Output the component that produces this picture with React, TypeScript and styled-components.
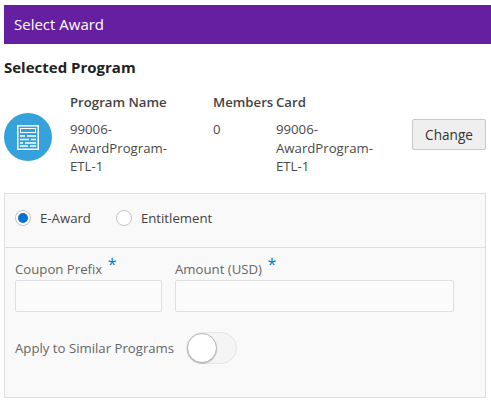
import React from "react";
import styled, { createGlobalStyle } from "styled-components";

const GlobalStyle = createGlobalStyle`
  html, body {
    margin: 0;
    padding: 0;
    background: #fff;
  }
  body {
    font-family: "Open Sans", "Noto Sans", sans-serif;
    color: #333;
  }
`;

const ProgramIcon = () => (
  <svg width="22" height="25" viewBox="0 0 22 25" fill="none">
    <rect x="0.75" y="0.75" width="20.5" height="23.5" stroke="#fff" strokeWidth="1.5" />
    <rect x="3.5" y="3.5" width="15" height="4" stroke="#fff" strokeWidth="1" />
    <path d="M3 11h5M10 11h9M3 14.5h9M14 14.5h5M3 18h3M8 18h11M3 21h8M13 21h6" stroke="#fff" strokeWidth="1.5" />
  </svg>
);

const App: React.FC = () => {
  return (
    <Page>
      <GlobalStyle />
      <Header>Select Award</Header>
      <SectionTitle>Selected Program</SectionTitle>
      <ProgramRow>
        <IconCircle>
          <ProgramIcon />
        </IconCircle>
        <Table>
          <Heading>Program Name</Heading>
          <Heading>Members</Heading>
          <Heading>Card</Heading>
          <Value>99006-<br />AwardProgram-<br />ETL-1</Value>
          <Value>0</Value>
          <Value>99006-<br />AwardProgram-<br />ETL-1</Value>
        </Table>
        <ChangeButton>Change</ChangeButton>
      </ProgramRow>
      <Panel>
        <RadioRow>
          <RadioLabel>
            <Radio checked />
            E-Award
          </RadioLabel>
          <RadioLabel>
            <Radio />
            Entitlement
          </RadioLabel>
        </RadioRow>
        <FormArea>
          <Fields>
            <Field width={147}>
              <FieldLabel>Coupon Prefix <Star>*</Star></FieldLabel>
              <TextBox />
            </Field>
            <Field width={279}>
              <FieldLabel>Amount (USD) <Star>*</Star></FieldLabel>
              <TextBox />
            </Field>
          </Fields>
          <SwitchRow>
            <FieldLabel>Apply to Similar Programs</FieldLabel>
            <Switch>
              <Knob />
            </Switch>
          </SwitchRow>
        </FormArea>
      </Panel>
    </Page>
  );
};
export default App;

const Page = styled.div`
  width: 491px;
  height: 404px;
  box-sizing: border-box;
  padding: 5px 0 0 4px;
  overflow: hidden;
`;
const Header = styled.div`
  height: 39px;
  box-sizing: border-box;
  display: flex;
  align-items: center;
  padding: 0 0 2px 10px;
  background-color: #671fa1;
  color: #fff;
  font-size: 15px;
`;
const SectionTitle = styled.h2`
  margin: 13px 0 0;
  font-size: 15px;
  line-height: 20px;
  font-weight: 700;
  color: #222;
`;
const ProgramRow = styled.div`
  display: flex;
  align-items: flex-start;
  margin-top: 16px;
  width: 482px;
`;
const IconCircle = styled.div`
  width: 48px;
  height: 48px;
  margin-top: 20px;
  border-radius: 50%;
  background-color: #36a2dc;
  display: flex;
  align-items: center;
  justify-content: center;
  flex-shrink: 0;
`;
const Table = styled.div`
  display: grid;
  grid-template-columns: 143px 63px 136px;
  margin-left: 18px;
`;
const Heading = styled.div`
  font-size: 13.2px;
  font-weight: 600;
  line-height: 18px;
  color: #444;
  padding-bottom: 9px;
  white-space: nowrap;
`;
const Value = styled.div`
  font-size: 13.2px;
  line-height: 18.5px;
  color: #4a4a4a;
`;
const ChangeButton = styled.button`
  width: 74px;
  height: 31px;
  margin-top: 26px;
  padding: 0;
  box-sizing: border-box;
  background-color: #efefef;
  border: 1px solid #c8c8c8;
  border-radius: 2px;
  font-family: inherit;
  font-size: 13.6px;
  color: #333;
`;
const Panel = styled.div`
  width: 482px;
  height: 205px;
  margin-top: 17px;
  box-sizing: border-box;
  background-color: #f9f9f9;
  border: 1px solid #dfdfdf;
`;
const RadioRow = styled.div`
  height: 53px;
  box-sizing: content-box;
  display: flex;
  align-items: flex-start;
  gap: 25px;
  padding: 0 0 0 10px;
  border-bottom: 1px solid #d9e0e6;
`;
const RadioLabel = styled.label`
  display: flex;
  align-items: center;
  gap: 9px;
  margin-top: 15px;
  height: 18px;
  font-size: 13.2px;
  color: #444;
`;
const Radio = styled.span<{ checked?: boolean }>`
  width: 16px;
  height: 16px;
  box-sizing: border-box;
  border-radius: 50%;
  border: 1px solid #c4c4c4;
  background-color: #fff;
  display: flex;
  align-items: center;
  justify-content: center;
  &::after {
    content: "";
    display: ${(props) => (props.checked ? "block" : "none")};
    width: 10px;
    height: 10px;
    border-radius: 50%;
    background-color: #0572ce;
  }
`;
const FormArea = styled.div`
  padding: 11px 10px 0;
`;
const Fields = styled.div`
  display: flex;
  gap: 13px;
`;
const Field = styled.div<{ width: number }>`
  width: ${(props) => props.width}px;
`;
const FieldLabel = styled.div`
  font-size: 13.2px;
  line-height: 20px;
  color: #666;
  white-space: nowrap;
`;
const Star = styled.span`
  color: #0572ce;
  font-size: 16px;
  line-height: 16px;
  position: relative;
  top: -4px;
  margin-left: 2px;
`;
const TextBox = styled.div`
  height: 32px;
  margin-top: 1px;
  box-sizing: border-box;
  background-color: #fbfbfb;
  border: 1px solid #dfdfdf;
  border-radius: 2px;
`;
const SwitchRow = styled.div`
  display: flex;
  align-items: center;
  gap: 12px;
  margin-top: 20px;
`;
const Switch = styled.div`
  width: 51px;
  height: 32px;
  box-sizing: border-box;
  background-color: #f5f5f5;
  border: 1px solid #e6e6e6;
  border-radius: 16px;
  display: flex;
  align-items: center;
`;
const Knob = styled.div`
  width: 30px;
  height: 30px;
  box-sizing: border-box;
  border-radius: 50%;
  background-color: #fff;
  border: 1px solid #b5b5b5;
  box-shadow: 0 1px 1px rgba(0, 0, 0, 0.2);
`;
